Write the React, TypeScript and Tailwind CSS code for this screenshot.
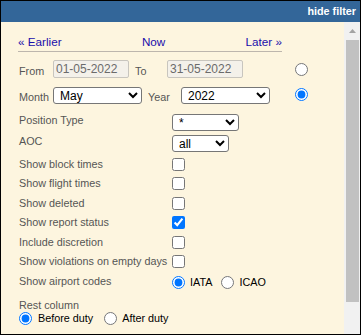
import React from 'react';

const labelCls = 'text-[10.8px] leading-[13px] text-[#555555]';

const Radio: React.FC<{ checked?: boolean; name: string; className?: string }> = ({
  checked,
  name,
  className = '',
}) => (
  <input
    type="radio"
    name={name}
    defaultChecked={checked}
    className={`m-0 w-[13px] h-[13px] shrink-0 ${className}`}
  />
);

const CheckRow: React.FC<{ label: string; checked?: boolean }> = ({ label, checked }) => (
  <div className="flex items-start h-[19.6px]">
    <span className={`w-[153px] shrink-0 ${labelCls}`}>{label}</span>
    <input type="checkbox" defaultChecked={checked} className="m-0 w-[13px] h-[13px]" />
  </div>
);

const selectCls =
  'h-[17px] py-0 pl-[2px] bg-white border border-[#767676] rounded-[3px] text-[12px] leading-[15px] text-black';

export default function App() {
  return (
    <div className="w-[361px] h-[335px] border border-black bg-[#fdf5df] flex flex-col overflow-hidden font-['Liberation_Sans',Arial,sans-serif]">
      <div className="h-[21px] shrink-0 bg-[#336699] text-white font-bold text-[10.8px] flex items-center justify-end pr-[4px]">
        hide filter
      </div>
      <div className="flex flex-1 min-h-0">
        <div className="flex-1 pl-[17px]">
          {/* period navigation */}
          <div className="mt-[13px] w-[264px] pb-[2px] border-b border-[#bdb6ad] flex justify-between text-[11.7px] leading-[14px] text-[#1a0dab]">
            <span>« Earlier</span>
            <span>Now</span>
            <span>Later »</span>
          </div>

          <div className="pl-[1px]">
            {/* date range */}
            <div className="mt-[8px] flex h-[18px]">
              <span className={`w-[34px] self-end ${labelCls}`}>From</span>
              <input
                readOnly
                defaultValue="01-05-2022"
                className="w-[76px] h-[18px] pl-[2px] bg-[#f4f1ea] border border-[#c8c5be] rounded-[2px] text-[12px] text-[#6b6b6b]"
              />
              <span className={`ml-[6px] w-[32px] self-end ${labelCls}`}>To</span>
              <input
                readOnly
                defaultValue="31-05-2022"
                className="w-[76px] h-[18px] pl-[2px] bg-[#f4f1ea] border border-[#c8c5be] rounded-[2px] text-[12px] text-[#6b6b6b]"
              />
              <Radio name="period" className="ml-[52px] self-center" />
            </div>

            <div className="mt-[9px] flex h-[17px]">
              <span className={`w-[34px] self-end ${labelCls}`}>Month</span>
              <select defaultValue="May" className={`w-[89px] ${selectCls}`}>
                <option>May</option>
              </select>
              <span className={`ml-[6px] w-[33px] self-end ${labelCls}`}>Year</span>
              <select defaultValue="2022" className={`w-[89px] ${selectCls}`}>
                <option>2022</option>
              </select>
              <Radio name="period" checked className="ml-[25px] self-center -mt-[2px]" />
            </div>

            {/* options */}
            <div className="mt-[10px] flex items-start h-[21px]">
              <span className={`w-[153px] shrink-0 ${labelCls}`}>Position Type</span>
              <select defaultValue="*" className={`w-[67px] ${selectCls}`}>
                <option>*</option>
              </select>
            </div>
            <div className="flex items-start h-[22.5px]">
              <span className={`w-[153px] shrink-0 ${labelCls}`}>AOC</span>
              <select defaultValue="all" className={`w-[57px] ${selectCls}`}>
                <option>all</option>
              </select>
            </div>

            <CheckRow label="Show block times" />
            <CheckRow label="Show flight times" />
            <CheckRow label="Show deleted" />
            <CheckRow label="Show report status" checked />
            <CheckRow label="Include discretion" />
            <CheckRow label="Show violations on empty days" />

            <div className="flex items-start h-[24px]">
              <span className={`w-[153px] shrink-0 ${labelCls}`}>Show airport codes</span>
              <div className="mt-[1px] flex items-center text-[10.8px] leading-[13px] text-black">
                <Radio name="codes" checked />
                <span className="ml-[5px]">IATA</span>
                <Radio name="codes" className="ml-[9px]" />
                <span className="ml-[5px]">ICAO</span>
              </div>
            </div>

            <div className={labelCls}>Rest column</div>
            <div className="flex items-center text-[10.8px] leading-[13px] text-black">
              <Radio name="rest" checked />
              <span className="ml-[6px]">Before duty</span>
              <Radio name="rest" className="ml-[11px]" />
              <span className="ml-[5px]">After duty</span>
            </div>
          </div>
        </div>

        {/* scrollbar */}
        <div className="w-[16px] shrink-0 bg-[#f1f1f1] flex flex-col">
          <div className="h-[18px] flex items-center justify-center">
            <svg width="7" height="4" viewBox="0 0 7 4">
              <polygon points="3.5,0 7,4 0,4" fill="#a3a3a3" />
            </svg>
          </div>
          <div className="ml-[2px] mr-[1px] h-[262px] bg-[#c1c1c1]" />
        </div>
      </div>
    </div>
  );
}
